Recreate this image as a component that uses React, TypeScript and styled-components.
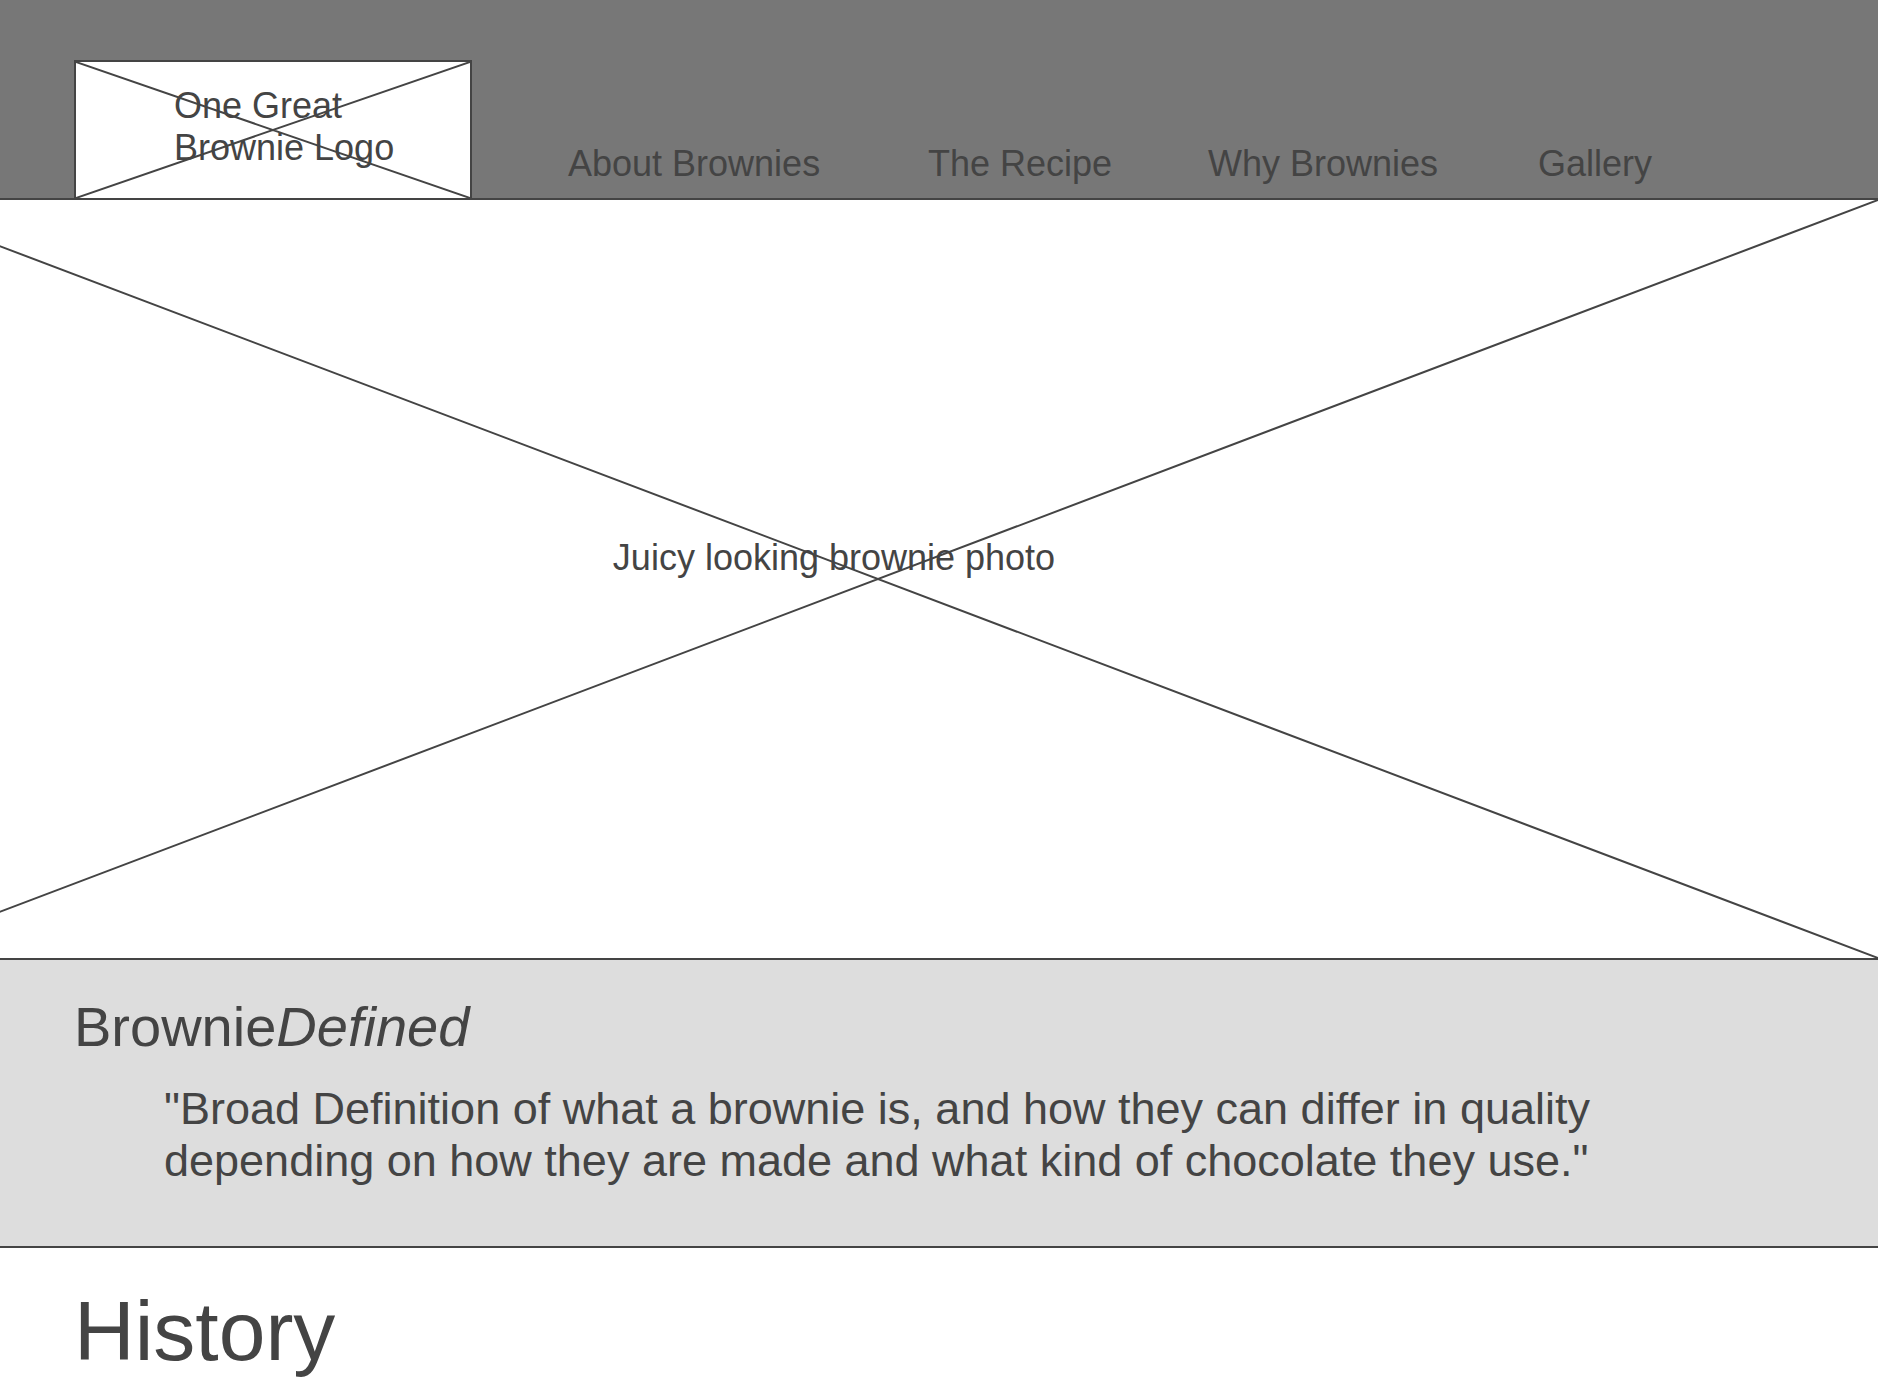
import React from "react";
import styled, { createGlobalStyle } from "styled-components";

const INK = "#444444";
const BAR = "#777777";
const PANEL = "#dddddd";

const GlobalStyle = createGlobalStyle`
  * { box-sizing: border-box; }
  body {
    margin: 0;
    background: #ffffff;
    color: ${INK};
    font-family: "Liberation Sans", Arial, Helvetica, sans-serif;
    font-size: 36px;
    line-height: 42px;
    overflow-x: hidden;
  }
`;

const Header = styled.header`
  display: flex;
  align-items: flex-end;
  gap: 96px;
  padding: 60px 74px 0;
  background: ${BAR};
  border-bottom: 2px solid ${INK};
`;

const LogoBox = styled.a`
  position: relative;
  flex: none;
  width: 398px;
  height: 138px;
  padding: 23px 98px 0;
  background: #ffffff;
  border: 2px solid ${INK};
  border-bottom: 0;
  color: inherit;
  text-decoration: none;
  white-space: nowrap;
`;

const CrossSvg = styled.svg`
  position: absolute;
  inset: 0;
  width: 100%;
  height: 100%;
  pointer-events: none;
`;

const NavList = styled.ul`
  display: grid;
  grid-template-columns: 360px 280px 330px auto;
  margin: 0;
  padding: 0 0 13px;
  list-style: none;
`;

const NavLink = styled.a`
  color: inherit;
  text-decoration: none;
  white-space: nowrap;
`;

const HeroClip = styled.section`
  overflow: hidden;
  border-bottom: 2px solid ${INK};
`;

const HeroPhoto = styled.div`
  position: relative;
  display: flex;
  align-items: center;
  justify-content: center;
  height: 758px;
  margin-left: -122px;
  padding: 0 88px 42px 0;
`;

const Caption = styled.p`
  margin: 0;
`;

const Defined = styled.section`
  padding: 35px 74px 59px;
  background: ${PANEL};
  border-bottom: 2px solid ${INK};
`;

const Title = styled.h1`
  margin: 0;
  font-size: 56px;
  line-height: 64px;
  font-weight: 400;
`;

const Quote = styled.blockquote`
  max-width: 1450px;
  margin: 24px 0 0 90px;
  font-size: 45px;
  line-height: 52px;
`;

const History = styled.section`
  padding: 35px 74px 21px;
`;

const HistoryTitle = styled.h2`
  margin: 0;
  font-size: 84px;
  line-height: 96px;
  font-weight: 400;
`;

function Cross() {
  return (
    <CrossSvg viewBox="0 0 100 100" preserveAspectRatio="none" aria-hidden="true">
      <path
        d="M0 0L100 100M0 100L100 0"
        fill="none"
        stroke={INK}
        strokeWidth="2"
        vectorEffect="non-scaling-stroke"
      />
    </CrossSvg>
  );
}

const links = [
  { label: "About Brownies", href: "#about" },
  { label: "The Recipe", href: "#recipe" },
  { label: "Why Brownies", href: "#why" },
  { label: "Gallery", href: "#gallery" },
];

export default function App() {
  return (
    <>
      <GlobalStyle />
      <Header>
        <LogoBox href="#home">
          One Great
          <br />
          Brownie Logo
          <Cross />
        </LogoBox>
        <nav>
          <NavList>
            {links.map((link) => (
              <li key={link.href}>
                <NavLink href={link.href}>{link.label}</NavLink>
              </li>
            ))}
          </NavList>
        </nav>
      </Header>
      <main>
        <HeroClip>
          <HeroPhoto>
            <Caption>Juicy looking brownie photo</Caption>
            <Cross />
          </HeroPhoto>
        </HeroClip>
        <Defined id="about">
          <Title>
            Brownie<em>Defined</em>
          </Title>
          <Quote>
            "Broad Definition of what a brownie is, and how they can differ in quality
            depending on how they are made and what kind of chocolate they use."
          </Quote>
        </Defined>
        <History>
          <HistoryTitle>History</HistoryTitle>
        </History>
      </main>
    </>
  );
}
